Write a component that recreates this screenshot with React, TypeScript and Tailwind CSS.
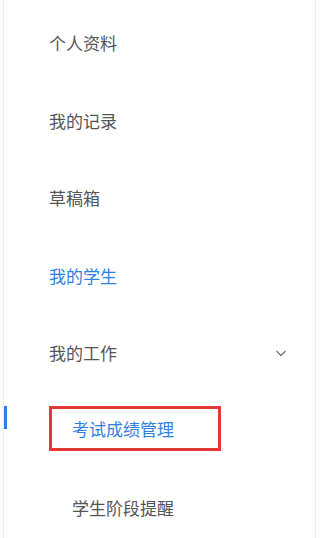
import React from 'react';

const font = { fontFamily: '"Noto Sans CJK SC", "Microsoft YaHei", sans-serif' };

const App: React.FC = () => {
    return (
        <div className="w-[320px] h-[538px] bg-white overflow-hidden" style={font}>
            <div className="ml-[3px] w-[313px] h-full border-l border-r border-[#ececec] pt-[4px] text-[17px] text-[#555]">
                <div className="h-[77.5px] flex items-center pl-[45px]">个人资料</div>
                <div className="h-[77.5px] flex items-center pl-[45px]">我的记录</div>
                <div className="h-[77.5px] flex items-center pl-[45px]">草稿箱</div>
                <div className="h-[77.5px] flex items-center pl-[45px] text-[#2f80e0]">我的学生</div>
                <div className="h-[77.5px] flex items-center justify-between pl-[45px] pr-[27px]">
                    <span>我的工作</span>
                    <svg width="14" height="14" viewBox="0 0 14 14" fill="none" stroke="#777" strokeWidth="1.3">
                        <path d="M2.5 5 L7 9.5 L11.5 5" />
                    </svg>
                </div>
                {/* active sub item */}
                <div className="relative h-[77.5px] flex items-center pl-[45px]">
                    <div className="absolute left-[0px] top-[14px] w-[3px] h-[23px] bg-[#2f80e0]" />
                    <div className="w-[172px] h-[45px] border-[3px] border-[#e53935] flex items-center pl-[20px] text-[#2f80e0] -mt-[4px]">
                        考试成绩管理
                    </div>
                </div>
                <div className="h-[77.5px] flex items-center pl-[68px]">学生阶段提醒</div>
            </div>
        </div>
    );
};

export default App;
